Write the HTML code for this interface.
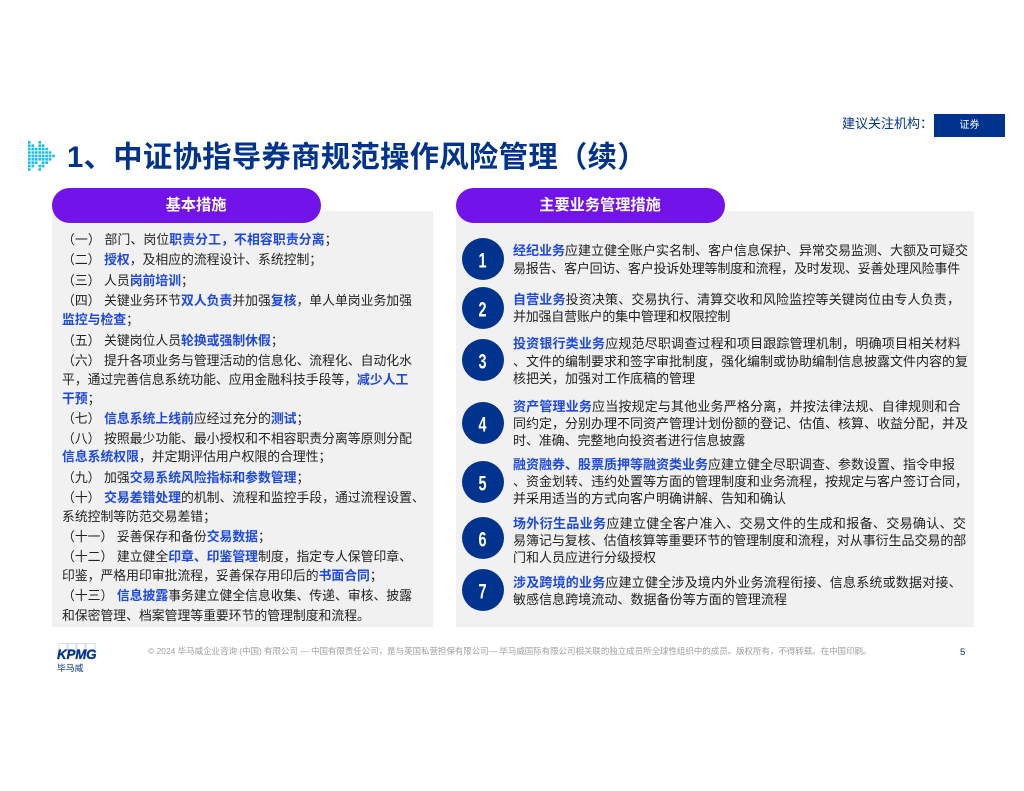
<!DOCTYPE html>
<html lang="zh">
<head>
<meta charset="utf-8">
<style>
html,body{margin:0;padding:0;background:#fff}
#p{position:relative;width:1024px;height:791px;overflow:hidden;background:#fff;font-family:"Liberation Sans","Noto Sans CJK SC",sans-serif;color:#222;filter:blur(.25px)}
#p div{position:absolute;white-space:nowrap}
.panel{background:#f1f1f1;top:211px;height:416px}
.pill{background:#7213ea;top:188px;height:35px;width:269px;border-radius:17.5px;color:#fff;font-weight:700;font-size:15.2px;line-height:35px;text-align:center;text-indent:19px}
.a,.b{line-height:20px;height:20px}
.a{left:62px;font-size:12.83px}
.b{left:513px;font-size:13px}
b{color:#1e49e2;font-weight:700}
.c{left:462px;width:42px;height:42px;border-radius:50%;background:#00338d;color:#fff;text-align:center;font:700 20px/46px "Liberation Sans",sans-serif}
.c span{display:inline-block;transform:scale(.72,1.08)}
</style>
</head>
<body>
<div id="p">
<svg style="position:absolute;left:28px;top:141px" width="28" height="30" viewBox="0 0 28 30" fill="#12bdf5">
<path d="M0 0h2.6v2.6H0zM10.4 0h2.6v2.6h-2.6z
M0 3.4h2.6V6H0zM3.5 3.4h2.6V6H3.500zM10.4 3.400h2.6V6h-2.6zM13.800 3.400h2.600V6h-2.600z
M0 6.800h2.600v2.600H0zM3.500 6.800h2.600v2.600H3.500zM6.900 6.800h2.600v2.600H6.900zM10.400 6.800h2.600v2.600h-2.600zM13.800 6.800h2.600v2.600h-2.600zM17.300 6.800h2.600v2.600h-2.600z
M0 10.200h2.600v2.600H0zM3.500 10.200h2.600v2.600H3.500zM6.900 10.200h2.600v2.600H6.900zM10.400 10.200h2.600v2.600h-2.600zM13.800 10.200h2.600v2.600h-2.600zM17.300 10.200h2.600v2.600h-2.600zM20.700 10.200h2.600v2.600h-2.600z
M0 13.600h2.600v2.600H0zM3.500 13.600h2.600v2.600H3.500zM6.900 13.600h2.600v2.600H6.900zM10.400 13.600h2.600v2.600h-2.600zM13.800 13.600h2.600v2.600h-2.600zM17.300 13.600h2.600v2.600h-2.600zM20.700 13.600h2.600v2.600h-2.600zM24.200 13.600h2.600v2.600h-2.600z
M0 17h2.600v2.600H0zM3.500 17h2.600v2.600H3.500zM6.900 17h2.600v2.600H6.900zM10.400 17h2.600v2.600h-2.600zM13.800 17h2.600v2.600h-2.600zM17.300 17h2.600v2.600h-2.600zM20.700 17h2.600v2.600h-2.600z
M0 20.400h2.600V23H0zM3.500 20.400h2.600V23H3.500zM6.900 20.400h2.600V23H6.900zM13.800 20.400h2.600V23h-2.600zM17.300 20.400h2.600V23h-2.600z
M0 23.800h2.600v2.600H0zM3.500 23.800h2.600v2.600H3.500zM10.400 23.800h2.600v2.600h-2.600zM13.800 23.800h2.600v2.600h-2.600z
M0 27.200h2.600v2.600H0zM10.400 27.200h2.600v2.600h-2.600z"/>
</svg>
<div style="left:67px;top:138px;font-size:29.3px;line-height:40px;font-weight:700;color:#00338d;letter-spacing:.35px">1、中证协指导券商规范操作风险管理（续）</div>
<div style="left:842px;top:114px;font-size:13px;line-height:20px;color:#00338d">建议关注机构：</div>
<div style="left:934px;top:114px;width:71px;height:23px;background:#00338d;color:#fff;font-size:10px;line-height:23px;text-align:center">证券</div>

<div class="panel" style="left:52px;width:381px"></div>
<div class="panel" style="left:456px;width:518px"></div>
<div class="pill" style="left:52px">基本措施</div>
<div class="pill" style="left:456px">主要业务管理措施</div>

<div class="a" style="top:230px;letter-spacing:.12px">（一） 部门、岗位<b>职责分工，不相容职责分离</b>；</div>
<div class="a" style="top:250px">（二） <b>授权</b>，及相应的流程设计、系统控制；</div>
<div class="a" style="top:271px">（三） 人员<b>岗前培训</b>；</div>
<div class="a" style="top:291px">（四） 关键业务环节<b>双人负责</b>并加强<b>复核</b>，单人单岗业务加强</div>
<div class="a" style="top:310px"><b>监控与检查</b>；</div>
<div class="a" style="top:331px">（五） 关键岗位人员<b>轮换或强制休假</b>；</div>
<div class="a" style="top:351px">（六） 提升各项业务与管理活动的信息化、流程化、自动化水</div>
<div class="a" style="top:370px">平，通过完善信息系统功能、应用金融科技手段等，<b>减少人工</b></div>
<div class="a" style="top:389px"><b>干预</b>；</div>
<div class="a" style="top:409px">（七） <b>信息系统上线前</b>应经过充分的<b>测试</b>；</div>
<div class="a" style="top:429px">（八） 按照最少功能、最小授权和不相容职责分离等原则分配</div>
<div class="a" style="top:447px"><b>信息系统权限</b>，并定期评估用户权限的合理性；</div>
<div class="a" style="top:468px">（九） 加强<b>交易系统风险指标和参数管理</b>；</div>
<div class="a" style="top:488px">（十） <b>交易差错处理</b>的机制、流程和监控手段，通过流程设置、</div>
<div class="a" style="top:507px">系统控制等防范交易差错；</div>
<div class="a" style="top:527px">（十一） 妥善保存和备份<b>交易数据</b>；</div>
<div class="a" style="top:547px">（十二） 建立健全<b>印章、印鉴管理</b>制度，指定专人保管印章、</div>
<div class="a" style="top:566px">印鉴，严格用印审批流程，妥善保存用印后的<b>书面合同</b>；</div>
<div class="a" style="top:586px">（十三） <b>信息披露</b>事务建立健全信息收集、传递、审核、披露</div>
<div class="a" style="top:606px">和保密管理、档案管理等重要环节的管理制度和流程。</div>

<div class="c" style="top:238px"><span>1</span></div>
<div class="c" style="top:287px"><span>2</span></div>
<div class="c" style="top:339px"><span>3</span></div>
<div class="c" style="top:402px"><span>4</span></div>
<div class="c" style="top:461px"><span>5</span></div>
<div class="c" style="top:517px"><span>6</span></div>
<div class="c" style="top:569px"><span>7</span></div>

<div class="b" style="top:241px"><b>经纪业务</b>应建立健全账户实名制、客户信息保护、异常交易监测、大额及可疑交</div>
<div class="b" style="top:259px;letter-spacing:-.23px">易报告、客户回访、客户投诉处理等制度和流程，及时发现、妥善处理风险事件</div>
<div class="b" style="top:290px;letter-spacing:.15px"><b>自营业务</b>投资决策、交易执行、清算交收和风险监控等关键岗位由专人负责，</div>
<div class="b" style="top:307px;letter-spacing:-.23px">并加强自营账户的集中管理和权限控制</div>
<div class="b" style="top:334px;letter-spacing:.17px"><b>投资银行类业务</b>应规范尽职调查过程和项目跟踪管理机制，明确项目相关材料</div>
<div class="b" style="top:352px">、文件的编制要求和签字审批制度，强化编制或协助编制信息披露文件内容的复</div>
<div class="b" style="top:369px">核把关，加强对工作底稿的管理</div>
<div class="b" style="top:397px;letter-spacing:.17px"><b>资产管理业务</b>应当按规定与其他业务严格分离，并按法律法规、自律规则和合</div>
<div class="b" style="top:414px">同约定，分别办理不同资产管理计划份额的登记、估值、核算、收益分配，并及</div>
<div class="b" style="top:431px;letter-spacing:-.1px">时、准确、完整地向投资者进行信息披露</div>
<div class="b" style="top:455px"><b>融资融券、股票质押等融资类业务</b>应建立健全尽职调查、参数设置、指令申报</div>
<div class="b" style="top:472px">、资金划转、违约处置等方面的管理制度和业务流程，按规定与客户签订合同，</div>
<div class="b" style="top:489px">并采用适当的方式向客户明确讲解、告知和确认</div>
<div class="b" style="top:514px;letter-spacing:.33px"><b>场外衍生品业务</b>应建立健全客户准入、交易文件的生成和报备、交易确认、交</div>
<div class="b" style="top:531px;letter-spacing:-.05px">易簿记与复核、估值核算等重要环节的管理制度和流程，对从事衍生品交易的部</div>
<div class="b" style="top:548px">门和人员应进行分级授权</div>
<div class="b" style="top:573px;letter-spacing:.2px"><b>涉及跨境的业务</b>应建立健全涉及境内外业务流程衔接、信息系统或数据对接、</div>
<div class="b" style="top:590px;letter-spacing:.05px">敏感信息跨境流动、数据备份等方面的管理流程</div>

<svg style="position:absolute;left:58px;top:643px" width="40" height="9" viewBox="0 0 40 9" fill="#fff" stroke="#c3d0e6" stroke-width=".7">
<rect x="1" y="0.400" width="8" height="8.600"/><rect x="10" y="0.400" width="8" height="8.600"/><rect x="19" y="0.400" width="8" height="8.600"/><rect x="28" y="0.400" width="9" height="8.600"/>
</svg>
<div style="left:57px;top:648px;font:italic 700 13.4px/14px 'Liberation Sans',sans-serif;color:#00338d;letter-spacing:-.2px;-webkit-text-stroke:.3px #00338d">KPMG</div>
<div style="left:57px;top:662px;font-size:8.8px;line-height:12px;color:#00338d">毕马威</div>
<div style="left:148px;top:645px;font-size:8.46px;line-height:12px;color:#a0a0a0">© 2024 毕马威企业咨询 (中国) 有限公司 — 中国有限责任公司，是与英国私营担保有限公司— 毕马威国际有限公司相关联的独立成员所全球性组织中的成员。版权所有，不得转载。在中国印刷。</div>
<div style="left:960px;top:646px;font-size:9.5px;line-height:13px;color:#00338d">5</div>
</div>
</body>
</html>
